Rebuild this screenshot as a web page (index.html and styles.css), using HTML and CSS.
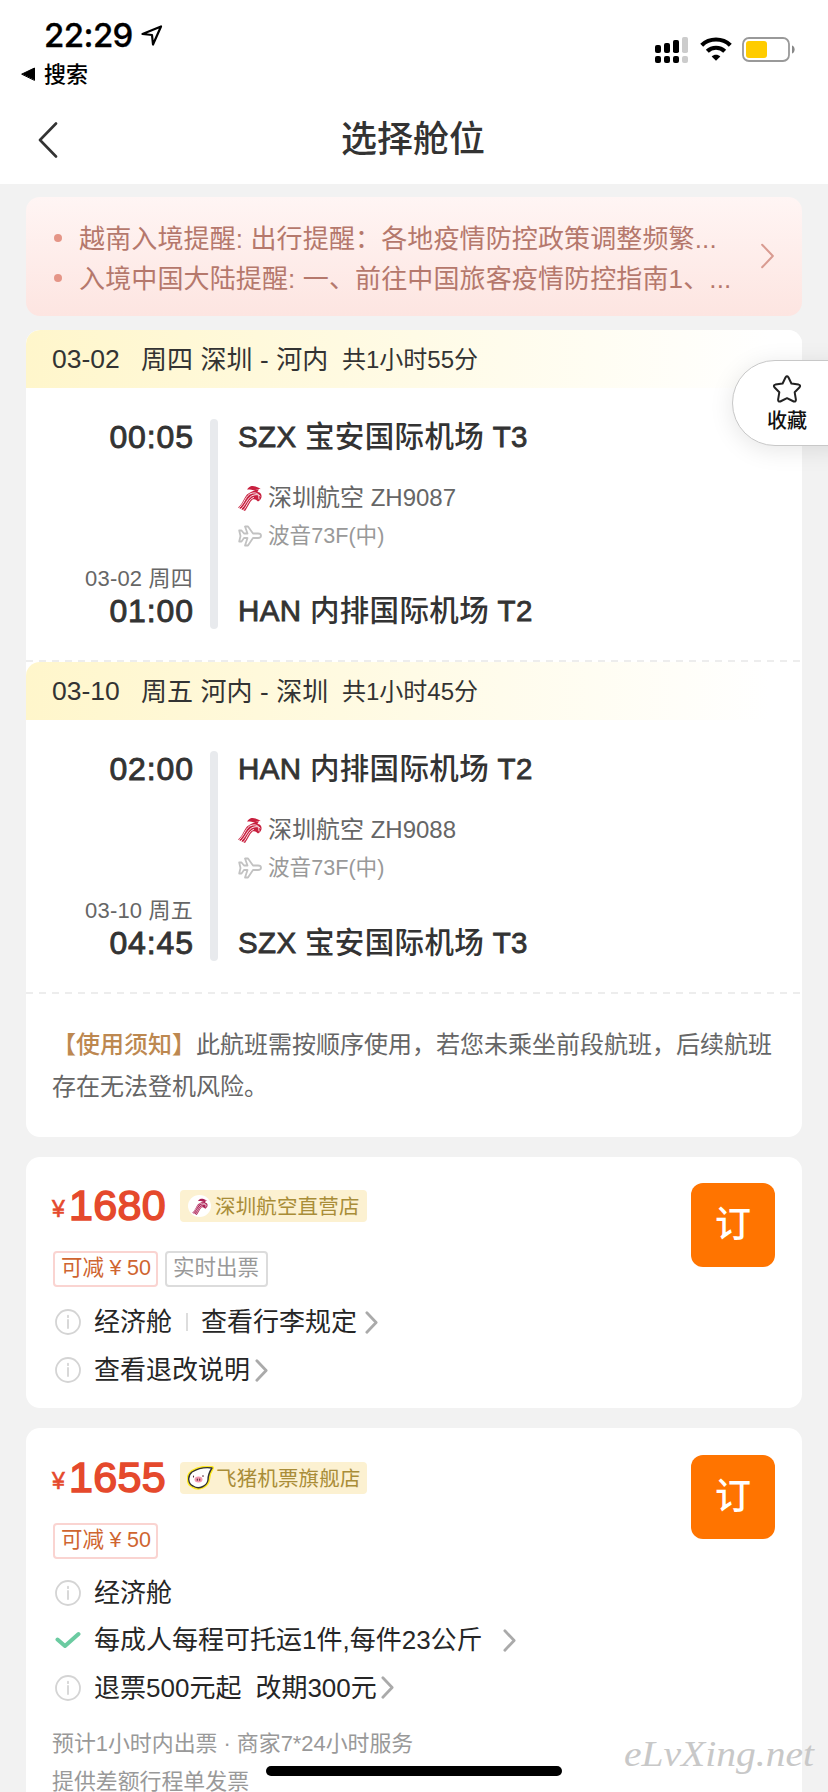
FILE: index.html
```
<!DOCTYPE html>
<html lang="zh-CN">
<head>
<meta charset="utf-8">
<title>选择舱位</title>
<link rel="stylesheet" href="styles.css">
</head>
<body>
<svg class="defs" aria-hidden="true">
  <symbol id="bird" viewBox="0 0 24 26">
    <path d="M10 3.200C12 .8 15 .6 17.500 1.500C19 2 21 3 23 4.200C20 3.600 18.500 5 16 5.200C14 5.300 12.500 4.300 9 4.600Z"/>
    <path d="M9 9.500C12 7 15 6.500 18 4.500L21 4.500C20 6 19 6.500 20 7C25 8 24.500 14.500 20 16.500C18.500 15.500 17.500 13.500 14.500 14.500C11.500 17 10 22 7 26L0 22.500C4 20 6.500 12 9 9.500Z"/>
    <path class="bird-line" d="M3 24C8 20 9.500 11.500 16 10S20 12 21 14M5.500 25C9.500 21 10 14.500 15.500 12.500M1.500 22.500C6.500 18 8 10 13 8.500S19 8.500 22 11"/>
  </symbol>
  <symbol id="plane" viewBox="0 0 24 22">
    <path d="M1.200 5.500H3.500L6 8.500H9.500L7 1.500H10L15 8.500H20C24 8.500 24 13 20 13H15L10 20.500H7L9.500 13H6L3.500 16.500H1.200L2.500 11Z"/>
  </symbol>
  <symbol id="info" viewBox="0 0 26 26">
    <circle cx="13" cy="13" r="12"/><path d="M13 11V19M13 6.700V8.200"/>
  </symbol>
  <symbol id="chev" viewBox="0 0 14 24"><path d="M2 1.500L12 12L2 22.500"/></symbol>
</svg>

<header class="top">
  <div class="status">
    <div class="status-left">
      <div class="clock"><span class="clock-time">22:29</span>
        <svg class="location" viewBox="0 0 22 21"><path d="M1.500 9L20 1.500L12 19.500L11 10Z"/></svg>
      </div>
      <div class="back-app"><svg class="back-tri" viewBox="0 0 15 14"><path d="M1 7L13.500 1V13Z"/></svg><span class="back-name">搜索</span></div>
    </div>
    <div class="status-right">
      <svg class="signal" viewBox="0 0 33 26">
        <rect x="0" y="8" width="6" height="8" rx="2"/><rect x="9" y="6" width="6" height="10" rx="2"/><rect x="18" y="3" width="6" height="13" rx="1.800"/><rect class="dim" x="27" y="0" width="6" height="16" rx="1.800"/>
        <rect x="0" y="19" width="6" height="7" rx="2"/><rect x="9" y="19" width="6" height="7" rx="2"/><rect x="18" y="19" width="6" height="7" rx="2"/><rect class="dim" x="27" y="19" width="6" height="7" rx="2"/>
      </svg>
      <svg class="wifi" viewBox="0 0 32 24"><path d="M1.700 8.200C9.500 .6 22.500 .6 30.300 8.200M7.300 14.200C12 9.600 20 9.600 24.700 14.200"/><path class="wifi-dot" d="M16 23.700L11.700 19.500C14 17 18 17 20.300 19.500Z"/></svg>
      <svg class="battery" viewBox="0 0 53 25"><rect class="case" x="1" y="1" width="46" height="23" rx="6"/><rect class="charge" x="4" y="4" width="21" height="17" rx="3"/><path class="cap" d="M50 8.500C53.500 9.500 53.500 15.500 50 16.500Z"/></svg>
    </div>
  </div>
  <nav class="nav">
    <svg class="back" viewBox="0 0 20 36"><path d="M18 1.500L2 18L18 34.500"/></svg>
    <h1 class="title">选择舱位</h1>
  </nav>
</header>

<main class="page">
  <section class="notice">
    <ul class="notice-list">
      <li class="notice-item">越南入境提醒: 出行提醒：各地疫情防控政策调整频繁...</li>
      <li class="notice-item">入境中国大陆提醒: 一、前往中国旅客疫情防控指南1、...</li>
    </ul>
    <svg class="notice-chev"><use href="#chev"/></svg>
  </section>

  <section class="card trip">
    <div class="leg-head"><span class="leg-date">03-02</span><span class="leg-route">周四 深圳 - 河内</span><span class="leg-time">共1小时55分</span></div>
    <div class="leg">
      <div class="times"><b class="time">00:05</b><div><div class="day">03-02 周四</div><b class="time">01:00</b></div></div>
      <div class="bar"></div>
      <div class="stops">
        <div class="airport"><span class="code">SZX</span> 宝安国际机场 <span class="code">T3</span></div>
        <div class="flight">
          <div class="airline"><svg class="bird"><use href="#bird"/></svg><span class="lift">深圳航空 ZH9087</span></div>
          <div class="craft"><svg class="plane"><use href="#plane"/></svg><span class="lift">波音73F(中)</span></div>
        </div>
        <div class="airport"><span class="code">HAN</span> 内排国际机场 <span class="code">T2</span></div>
      </div>
    </div>
    <div class="dash"></div>
    <div class="leg-head"><span class="leg-date">03-10</span><span class="leg-route">周五 河内 - 深圳</span><span class="leg-time">共1小时45分</span></div>
    <div class="leg">
      <div class="times"><b class="time">02:00</b><div><div class="day">03-10 周五</div><b class="time">04:45</b></div></div>
      <div class="bar"></div>
      <div class="stops">
        <div class="airport"><span class="code">HAN</span> 内排国际机场 <span class="code">T2</span></div>
        <div class="flight">
          <div class="airline"><svg class="bird"><use href="#bird"/></svg><span class="lift">深圳航空 ZH9088</span></div>
          <div class="craft"><svg class="plane"><use href="#plane"/></svg><span class="lift">波音73F(中)</span></div>
        </div>
        <div class="airport"><span class="code">SZX</span> 宝安国际机场 <span class="code">T3</span></div>
      </div>
    </div>
    <div class="dash"></div>
    <p class="rules"><b class="rules-tag">【使用须知】</b>此航班需按顺序使用，若您未乘坐前段航班，后续航班存在无法登机风险。</p>
  </section>

  <section class="card offer">
    <div class="offer-body">
      <div class="price-row"><span class="yen">¥</span><span class="price">1680</span>
        <span class="shop shop-air"><span class="shop-disc"><svg class="shop-bird"><use href="#bird"/></svg></span><span class="lift">深圳航空直营店</span></span></div>
      <div class="tags"><span class="tag tag-cut">可减<i class="tag-yen">¥</i>50</span><span class="tag tag-fast">实时出票</span></div>
      <ul class="facts">
        <li class="fact"><svg class="info"><use href="#info"/></svg><span class="lift">经济舱</span><i class="sep"></i><span class="lift">查看行李规定</span><svg class="chev chev-wide"><use href="#chev"/></svg></li>
        <li class="fact"><svg class="info"><use href="#info"/></svg><span class="lift">查看退改说明</span><svg class="chev"><use href="#chev"/></svg></li>
      </ul>
    </div>
    <button class="book">订</button>
  </section>

  <section class="card offer offer-pig">
    <div class="offer-body">
      <div class="price-row"><span class="yen">¥</span><span class="price">1655</span>
        <span class="shop shop-pig"><svg class="pig" viewBox="0 0 28 24"><path class="pig-glow" d="M25 2C18 1 10 3 5 6C0 10 1 18 6 20C12 24 20 20 21 14C21 9 23 5 25 2Z"/><path class="pig-face" d="M25 2C18 1 10 3 5 6C0 10 1 18 6 20C12 24 20 20 21 14C21 9 23 5 25 2Z"/><ellipse class="pig-nose" cx="11.500" cy="13.500" rx="4" ry="2.900"/><path class="pig-eyes" d="M6.500 10V11M16 9.500V10.500M10.300 13V14.200M12.700 13V14.200"/></svg><span class="lift">飞猪机票旗舰店</span></span></div>
      <div class="tags"><span class="tag tag-cut">可减<i class="tag-yen">¥</i>50</span></div>
      <ul class="facts">
        <li class="fact"><svg class="info"><use href="#info"/></svg><span class="lift">经济舱</span></li>
        <li class="fact"><svg class="check" viewBox="0 0 26 18"><path d="M2.500 8.500L10 15L23.500 3"/></svg><span class="lift">每成人每程可托运1件,每件23公斤</span><svg class="chev chev-far"><use href="#chev"/></svg></li>
        <li class="fact"><svg class="info"><use href="#info"/></svg><span class="lift">退票500元起</span><span class="lift change">改期300元</span><svg class="chev chev-near"><use href="#chev"/></svg></li>
      </ul>
      <p class="service">预计1小时内出票 · 商家7*24小时服务<br>提供差额行程单发票</p>
    </div>
    <button class="book">订</button>
  </section>
</main>

<button class="fav"><svg class="star" viewBox="0 0 30 29"><path d="M13.600 2.300Q15 .4 16.400 2.300L19.400 8.500L26.600 9.600Q29 10.200 27.600 12.200L22.700 17.300L23.900 24.600Q24 27 21.700 26.500L15 23.200L8.300 26.500Q6 27 6.100 24.600L7.300 17.300L2.400 12.200Q1 10.200 3.400 9.600L10.600 8.500Z"/></svg><span>收藏</span></button>
<div class="home"></div>
<svg class="mark" viewBox="0 0 200 50"><text x="4" y="32" textLength="190" lengthAdjust="spacingAndGlyphs">eLvXing.net</text></svg>
</body>
</html>
```
FILE: styles.css
```
* { box-sizing: border-box; }
html, body { width: 828px; height: 1792px; overflow: hidden; }
body { margin: 0; position: relative; background: #f2f2f2; color: #333; font-family: "Liberation Sans", "Noto Sans CJK SC", sans-serif; }
svg { flex: none; fill: none; stroke-linecap: round; stroke-linejoin: round; }
ul, h1, p { margin: 0; padding: 0; list-style: none; }
button { border: 0; padding: 0; font-family: inherit; }
i { font-style: normal; }
.defs { position: absolute; width: 0; height: 0; }
.lift { padding-bottom: 5px; }

.top { height: 184px; background: #fff; }
.status { display: flex; justify-content: space-between; height: 94px; padding: 16px 33px 0 21px; color: #000; }
.clock { display: flex; align-items: center; height: 38px; padding-left: 23px; gap: 9px; }
.clock-time { font: 500 33px/38px Inter, "Liberation Sans", sans-serif; width: 88px; letter-spacing: -.6px; white-space: nowrap; -webkit-text-stroke: .3px #000; }
.location { width: 22px; height: 21px; stroke: #000; stroke-width: 2.2; }
.back-app { display: flex; align-items: center; gap: 8px; height: 40px; font-size: 22px; font-weight: 500; }
.back-name { padding-bottom: 4px; }
.back-tri { width: 15px; height: 14px; fill: #000; stroke: #000; }
.status-right { display: flex; align-items: flex-start; padding-top: 21px; }
.signal { width: 33px; height: 26px; fill: #000; }
.signal .dim { fill: #ccc; }
.wifi { width: 32px; height: 24px; margin-left: 12px; stroke: #000; stroke-width: 4.2; stroke-linecap: butt; }
.wifi-dot { fill: #000; stroke: none; }
.battery { width: 53px; height: 25px; margin-left: 10px; }
.case { stroke: #999; stroke-width: 1.8; }
.charge { fill: #fc0; }
.cap { fill: #888; }
.nav { position: relative; display: flex; justify-content: center; align-items: center; height: 90px; }
.back { position: absolute; left: 38px; top: 28px; width: 20px; height: 36px; stroke: #333; stroke-width: 2.6; }
.title { font-size: 36px; line-height: 50px; font-weight: 500; padding: 2px 2px 0 0; }

.page { padding: 13px 26px 0; }
.notice { display: flex; align-items: center; justify-content: space-between; height: 119px; margin-bottom: 14px; padding: 2px 27px 0 28px; border-radius: 14px; background: linear-gradient(#fff5f4, #fde5e1); color: #b5786c; }
.notice-list { padding-top: 2px; }
.notice-item { position: relative; padding-left: 25px; font-size: 26px; line-height: 40px; letter-spacing: .13px; white-space: nowrap; }
.notice-item::before { content: ""; position: absolute; left: 0; top: 15px; width: 8px; height: 8px; border-radius: 50%; background: #e59587; }
.notice-chev { width: 15px; height: 26px; margin-bottom: 4px; stroke: #d99b91; stroke-width: 1.9; }

.card { border-radius: 14px; background: #fff; }
.trip { height: 807px; margin-bottom: 20px; overflow: hidden; }
.leg-head { display: flex; align-items: center; height: 58px; padding: 0 0 3px 26px; border-radius: 14px 0 0 0; background: linear-gradient(90deg, #fff6cb, #fffbe6 50%, #fff 96%); font-size: 26px; white-space: nowrap; }
.leg-date { width: 89px; padding-top: 3px; font-size: 26.5px; }
.leg-route { width: 201px; letter-spacing: .1px; }
.leg-time { font-size: 24px; }
.leg { display: grid; grid-template-columns: 168px 8px 1fr; height: 272px; padding: 31px 0 31px; column-gap: 16px; }
.times { display: flex; flex-direction: column; justify-content: space-between; text-align: right; }
.time { display: block; font-size: 32px; line-height: 36px; font-weight: 400; letter-spacing: .9px; -webkit-text-stroke: .9px #333; }
.day { font-size: 22px; line-height: 28px; letter-spacing: .2px; color: #666; padding-right: 1px; }
.bar { border-radius: 4px; background: #e8eaed; }
.stops { display: flex; flex-direction: column; justify-content: space-between; padding-left: 4px; }
.airport { font-size: 29.5px; line-height: 36px; font-weight: 500; letter-spacing: .35px; white-space: nowrap; }
.code { -webkit-text-stroke: .8px #333; }
.flight { padding-bottom: 14px; }
.airline, .craft { display: flex; align-items: center; gap: 6px; height: 38px; font-size: 24px; color: #666; }
.craft { font-size: 21.6px; color: #999; }
.bird { width: 24px; height: 26px; fill: #c8203f; }
.bird-line { fill: none; stroke: #fff; stroke-width: .9; }
.plane { width: 24px; height: 22px; stroke: #c2c2c2; stroke-width: 1.8; }
.dash { height: 2px; background: repeating-linear-gradient(90deg, #ededed 0 7px, #fff 7px 13px); }
.rules { padding: 30px 26px; font-size: 24px; line-height: 42px; color: #666; }
.rules-tag { color: #bd8850; font-weight: 500; }

.offer { display: flex; justify-content: space-between; align-items: flex-start; height: 251px; margin-bottom: 20px; padding: 26px 27px 0 26px; }
.offer-pig { height: 420px; padding-top: 27px; }
.price-row { display: flex; align-items: center; height: 46px; }
.yen { width: 17px; font-size: 23px; padding-top: 6px; color: #e5492c; -webkit-text-stroke: .6px #e5492c; }
.price { width: 111px; padding-bottom: 2px; font-size: 43px; font-weight: 400; line-height: 44px; color: #e5492c; -webkit-text-stroke: 1.6px #e5492c; letter-spacing: .3px; }
.shop { display: flex; align-items: center; height: 32px; width: 187px; padding-left: 8px; border-radius: 4px; background: #fcf1d1; color: #a98d38; font-size: 20.5px; letter-spacing: .15px; white-space: nowrap; }
.shop .lift { padding-bottom: 3px; }
.shop-disc { display: flex; align-items: center; justify-content: center; width: 23px; height: 22px; margin-right: 4px; border-radius: 50%; background: #fff; }
.shop-bird { width: 16px; height: 17px; fill: #ad2055; }
.pig { width: 28px; height: 24px; margin-left: -1px; margin-right: 1px; }
.pig-glow { stroke: #ffea21; stroke-width: 4; }
.pig-face { fill: #fff; stroke: #333; stroke-width: 1.4; }
.pig-nose { fill: #f49aae; }
.pig-eyes { stroke: #5b2a37; stroke-width: 1.1; }
.tags { display: flex; gap: 7px; margin-top: 22px; padding-left: 1px; }
.tag { height: 36px; padding: 0 6px; border: 2px solid #fad4d1; border-radius: 4px; font-size: 21.5px; line-height: 31px; color: #cf6530; white-space: nowrap; }
.tag-cut { width: 105px; }
.tag-yen { display: inline-block; width: 23px; text-align: center; }
.tag-fast { width: 103px; border-color: #dcdcdc; color: #999; }
.facts { padding-top: 11px; }
.offer-pig .facts { padding-top: 10px; }
.fact { display: flex; align-items: center; height: 48px; padding-left: 3px; font-size: 26px; color: #262626; white-space: nowrap; }
.offer-pig .fact { height: 47.5px; }
.info { width: 26px; height: 26px; margin-right: 13px; stroke: #d4d4d4; stroke-width: 1.8; }
.check { width: 26px; height: 18px; margin-right: 13px; stroke: #6bcba1; stroke-width: 4; }
.sep { width: 2px; height: 18px; margin: 0 13px 0 14px; background: #ddd; }
.chev { width: 13px; height: 23px; margin-left: 5px; stroke: #aaa; stroke-width: 3; }
.chev-wide { margin-left: 8px; }
.chev-near { margin-left: 4px; }
.chev-far { margin-left: 20px; }
.change { margin-left: 14px; }
.service { padding-top: 13px; font-size: 21.9px; line-height: 38px; color: #999; white-space: nowrap; }
.book { flex: none; width: 84px; height: 84px; border-radius: 12px; background: #ff7400; color: #fff; font-size: 36px; font-weight: 500; line-height: 82px; }

.fav { position: absolute; right: -44px; top: 360px; display: flex; flex-direction: column; align-items: center; width: 140px; height: 86px; padding: 14px 30px 0 0; border: 1px solid #c8c8c8; border-radius: 43px; background: #fff; box-shadow: 0 4px 24px rgba(0, 0, 0, .1); color: #111; font-size: 20px; line-height: 34px; font-weight: 500; }
.star { width: 30px; height: 29px; stroke: #222; stroke-width: 2; }
.home { position: absolute; left: 266px; bottom: 16px; width: 296px; height: 10px; border-radius: 5px; background: #000; }
.mark { position: absolute; left: 620px; top: 1734px; width: 200px; height: 50px; fill: #c8c8c8; font: italic 36px "Liberation Serif", serif; }
```
